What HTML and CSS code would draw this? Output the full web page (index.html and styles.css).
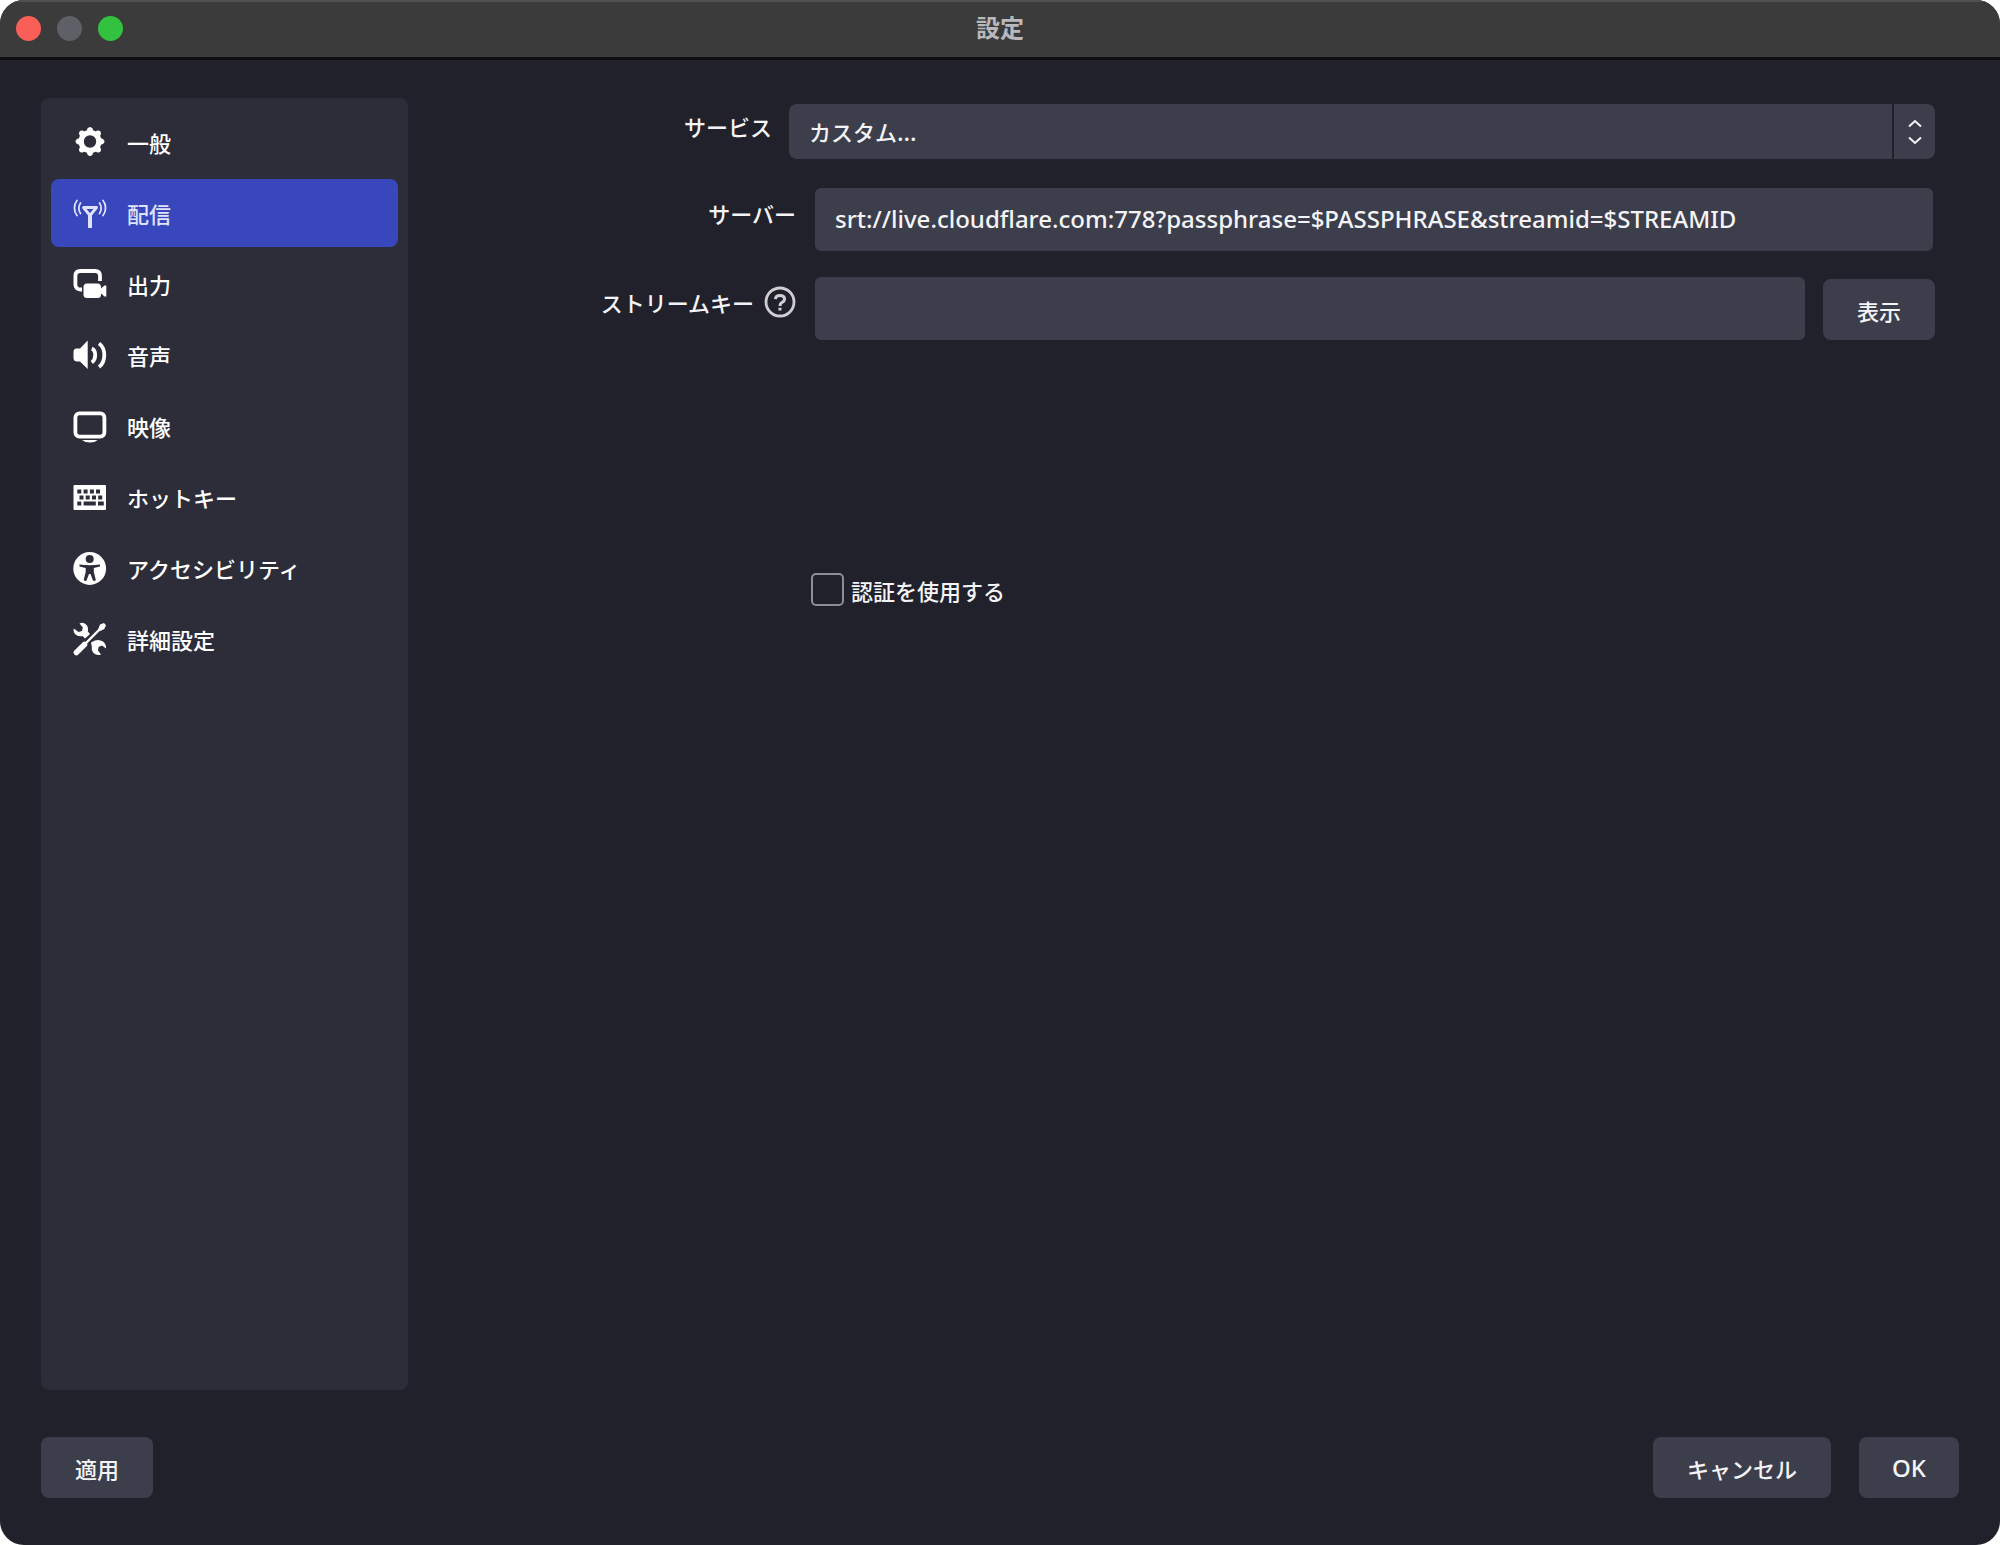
FILE: index.html
```html
<!DOCTYPE html>
<html lang="ja">
<head>
<meta charset="utf-8">
<title>設定</title>
<meta name="viewport" content="width=device-width, initial-scale=1">
<link rel="stylesheet" href="styles.css">
</head>
<body>
<div class="window">
  <header class="titlebar">
    <div class="lights">
      <button class="light light-close" type="button" aria-label="閉じる"></button>
      <button class="light light-min" type="button" aria-label="しまう" disabled></button>
      <button class="light light-zoom" type="button" aria-label="拡大"></button>
    </div>
    <h1 class="title">設定</h1>
  </header>

  <div class="content">
    <nav class="sidebar">
      <a class="item" href="#general">
        <svg class="icon" viewBox="0 0 34 34"><g fill="currentColor"><path fill-rule="evenodd" d="M17 5a11.500 11.500 0 1 0 0 23a11.500 11.500 0 1 0 0-23zM17 10.300a6.200 6.200 0 1 1 0 12.400a6.200 6.200 0 1 1 0-12.400z"/><g id="teeth"><path d="M13.500 6.500L14.500 3.500Q17 .5 19.500 3.500L20.500 6.500z"/><path d="M13.500 6.500L14.500 3.500Q17 .5 19.500 3.500L20.500 6.500z" transform="rotate(45 17 16.500)"/><path d="M13.500 6.500L14.500 3.500Q17 .5 19.500 3.500L20.500 6.500z" transform="rotate(90 17 16.500)"/><path d="M13.500 6.500L14.500 3.500Q17 .5 19.500 3.500L20.500 6.500z" transform="rotate(135 17 16.500)"/></g><use href="#teeth" transform="rotate(180 17 16.500)"/></g></svg>
        <span>一般</span>
      </a>
      <a class="item item-active" href="#stream" aria-current="page">
        <svg class="icon" viewBox="0 0 34 34" fill="none" stroke="currentColor"><path stroke-width="2.800" stroke-linejoin="round" d="M10.500 11.500h13L17 19.500z"/><path stroke-width="4" d="M17 17v15"/><path stroke-width="1.800" stroke-linecap="round" d="M4 4.500C.6 8.500.6 15.500 4 19.500M7.500 7C5.300 10 5.300 14.500 7.500 17.500M30 4.500c3.400 4 3.400 11 0 15M26.500 7c2.200 3 2.200 7.500 0 10.500"/></svg>
        <span>配信</span>
      </a>
      <a class="item" href="#output">
        <svg class="icon" viewBox="0 0 34 34"><path fill="none" stroke="currentColor" stroke-width="3.800" d="M9 22.500H7.500Q2.400 22.500 2.400 17.500V9Q2.400 4 7.400 4H22Q27 4 27 9V14"/><rect x="10.500" y="16.500" width="17.500" height="14.500" rx="3.500" fill="currentColor"/><path fill="currentColor" d="M27 22.300L31.500 18.500H33.300V29.500H31.500L27 25.500z"/></svg>
        <span>出力</span>
      </a>
      <a class="item" href="#audio">
        <svg class="icon" viewBox="0 0 34 34"><path fill="currentColor" d="M14.700 2.500V31L7 23.500H3.500Q.5 23 .5 20V14Q.5 10.800 3.500 10.500H7z"/><path fill="none" stroke="currentColor" stroke-width="3.800" d="M18.800 10.500Q22.200 12 22.200 17T18.800 24.500M26 5.500Q31.300 9 31.300 17T26 29"/></svg>
        <span>音声</span>
      </a>
      <a class="item" href="#video">
        <svg class="icon" viewBox="0 0 34 34"><rect x="2.400" y="4.400" width="29" height="23.200" rx="4" fill="none" stroke="currentColor" stroke-width="3.800"/><path fill="currentColor" d="M9 31H24.500Q22 33.500 17 33.500T9 31z"/></svg>
        <span>映像</span>
      </a>
      <a class="item" href="#hotkeys">
        <svg class="icon" viewBox="0 0 34 34"><path fill="currentColor" fill-rule="evenodd" d="M1.500 5H32a1 1 0 0 1 1 1V29a1 1 0 0 1-1 1H1.500a1 1 0 0 1-1-1V6a1 1 0 0 1 1-1zM4.300 9.500v4h4v-4zM10.600 9.500v4h4v-4zM16.900 9.500v4h4v-4zM23 9.500v4h4v-4zM6.500 15.500v4h4v-4zM12.700 15.500v4h4v-4zM19 15.500v4h4v-4zM25.200 15.500v4h4v-4zM4.300 21.500v4h4v-4zM10.600 21.500v4h12.200v-4zM25 21.500v4h5.800v-4z"/></svg>
        <span>ホットキー</span>
      </a>
      <a class="item" href="#accessibility">
        <svg class="icon" viewBox="0 0 34 34"><circle cx="16.700" cy="17.500" r="16.400" fill="currentColor"/><g class="cutout"><circle cx="16.700" cy="8" r="4"/><path d="M6.500 13.500Q16.700 15 27 13.500V15.500L20.800 17V21L22.800 29Q21.500 30.500 20 29.500L17.500 23H16L13.500 29.500Q12 30.500 10.700 29L12.700 21V17L6.500 15.500z"/></g></svg>
        <span>アクセシビリティ</span>
      </a>
      <a class="item" href="#advanced">
        <svg class="icon" viewBox="0 0 34 34"><g fill="none" stroke="currentColor"><path stroke-width="5.500" stroke-linecap="round" d="M3.400 30.500L11.500 22.500"/><path stroke-width="2.400" d="M11 23L28 6"/></g><g fill="currentColor"><path d="M25 7.500L27 2.500L31 1L33 3.200L31.300 7L26.800 9.200z"/><path d="M6.500 1.500Q11-.5 14 3.500Q15.500 6 14.800 9.500L17 12L12 16.500L9.500 14Q5 15 2 12Q0 9.500.8 6.500L5.500 10L9 9L9.800 5.500z"/><path d="M18 20.500L22 18.500Q26 17 30 19.500Q33.500 22.500 33 26.500L29 23.500L25.500 25L25 28.500L28 32.500Q24 34 20.500 31Q18 28 18.800 24.500z"/></g></svg>
        <span>詳細設定</span>
      </a>
    </nav>

    <main class="form">
      <div class="row row-service">
        <label class="label" for="service">サービス</label>
        <div class="select-box">
          <select class="field select" id="service"><option>カスタム...</option></select>
          <span class="stepper"><svg class="arrows" viewBox="0 0 14 26" fill="none" stroke="currentColor" stroke-width="2"><path d="M1 7.500L7 2L13 7.500M1 18.500L7 24L13 18.500"/></svg></span>
        </div>
      </div>
      <div class="row row-server">
        <label class="label" for="server">サーバー</label>
        <input class="field input" id="server" type="text" value="srt://live.cloudflare.com:778?passphrase=$PASSPHRASE&amp;streamid=$STREAMID">
      </div>
      <div class="row row-key">
        <label class="label" for="key">ストリームキー
          <svg class="help" viewBox="0 0 32 32" fill="none" stroke="currentColor"><circle cx="16" cy="16" r="14" stroke-width="2.800"/><path stroke-width="3" d="M11.400 13.200Q11.600 9.400 16 9.400T20.600 13Q20.600 15 18.300 16.300T16 20M16 21.800v2.800"/></svg>
        </label>
        <input class="field input" id="key" type="password">
        <button class="button" type="button">表示</button>
      </div>
      <label class="check"><input class="box" type="checkbox"><span>認証を使用する</span></label>
    </main>
  </div>

  <footer class="footer">
    <button class="button" type="button">適用</button>
    <div class="actions">
      <button class="button" type="button">キャンセル</button>
      <button class="button button-latin" type="button">OK</button>
    </div>
  </footer>
</div>
</body>
</html>
```
FILE: styles.css
```css
* {
  box-sizing: border-box;
}

body {
  margin: 0;
  background: #fff;
  color: #f4f4f6;
  font-family: "Noto Sans CJK JP", sans-serif;
  font-size: 22px;
  font-weight: 500;
  line-height: 32px;
}

.window {
  display: flex;
  flex-direction: column;
  min-height: 100vh;
  border-radius: 24px;
  background: #21212b;
  overflow: hidden;
}

/* Title bar */
.titlebar {
  display: grid;
  grid-template-columns: 1fr auto 1fr;
  align-items: center;
  height: 60px;
  padding: 0 16px;
  border-bottom: 3px solid #0e0e12;
  background: #3b3b3b;
  box-shadow: inset 0 2px #505050;
}

.lights {
  display: flex;
  gap: 16px;
}

.light {
  width: 25px;
  height: 25px;
  padding: 0;
  border: 0;
  border-radius: 50%;
}

.light-close {
  background: #f95f57;
}

.light-min {
  background: #5f5f68;
}

.light-zoom {
  background: #33c240;
}

.title {
  margin: 0;
  padding-bottom: 4px;
  color: #b9b9bd;
  font-size: 24px;
  font-weight: 700;
}

/* Category list and page */
.content {
  display: flex;
  flex: 1;
  padding: 38px 65px 0 41px;
}

.sidebar {
  display: flex;
  flex: none;
  flex-direction: column;
  gap: 3px;
  width: 367px;
  padding: 10px;
  border-radius: 8px;
  background: #2c2d39;
}

.item {
  display: flex;
  align-items: center;
  gap: 20px;
  height: 68px;
  padding: 0 22px;
  border-radius: 8px;
  color: #fefefe;
  text-decoration: none;
}

.item-active {
  background: #3847bb;
  color: #dfe3f9;
}

.icon {
  width: 34px;
  height: 34px;
}

.cutout {
  fill: #2c2d39;
}

.form {
  flex: 1;
  padding-top: 6px;
}

.row {
  display: flex;
  align-items: flex-start;
}

.label {
  display: flex;
  flex: none;
  align-items: center;
  justify-content: flex-end;
  gap: 10px;
  width: 388px;
  margin-right: 19px;
  padding-top: 9px;
}

.row-service .label {
  width: 364px;
  margin-right: 17px;
  padding-top: 6px;
}

.row-server {
  margin: 29px 2px 26px 0;
}

.row-key .button {
  margin: 2px 0 0 18px;
}

.help {
  width: 32px;
  height: 32px;
  color: #cfcfd3;
}

.field {
  width: 100%;
  min-width: 0;
  border: 0;
  border-radius: 6px;
  background: #3d3e4b;
  color: inherit;
  font: inherit;
}

.input {
  flex: 1;
  height: 63px;
  padding: 0 20px 2px;
  font-family: "Noto Sans", sans-serif;
  font-size: 24px;
}

.select-box {
  position: relative;
  flex: 1;
}

.select {
  display: block;
  height: 55px;
  padding: 0 64px 2px 20px;
  border-radius: 8px;
  appearance: none;
}

.stepper {
  position: absolute;
  inset: 0 0 0 auto;
  display: flex;
  align-items: center;
  justify-content: center;
  width: 43px;
  border-left: 2px solid #21212b;
  pointer-events: none;
}

.arrows {
  width: 14px;
  height: 26px;
}

.check {
  display: flex;
  align-items: center;
  gap: 7px;
  width: max-content;
  margin: 233px 0 0 403px;
}

.box {
  width: 33px;
  height: 33px;
  margin: 0;
  border: 2px solid #8e8e94;
  border-radius: 5px;
  appearance: none;
}

.box:checked {
  background: #3847bb;
}

/* Buttons */
.button {
  height: 61px;
  padding: 0 34px;
  border: 0;
  border-radius: 8px;
  background: #3d3e4b;
  color: inherit;
  font: inherit;
}

.button-latin {
  min-width: 100px;
  padding: 0 32px;
  font-family: "Noto Sans", sans-serif;
  font-size: 24px;
}

.footer {
  display: flex;
  justify-content: space-between;
  padding: 47px 41px 47px;
}

.actions {
  display: flex;
  gap: 28px;
}
```
